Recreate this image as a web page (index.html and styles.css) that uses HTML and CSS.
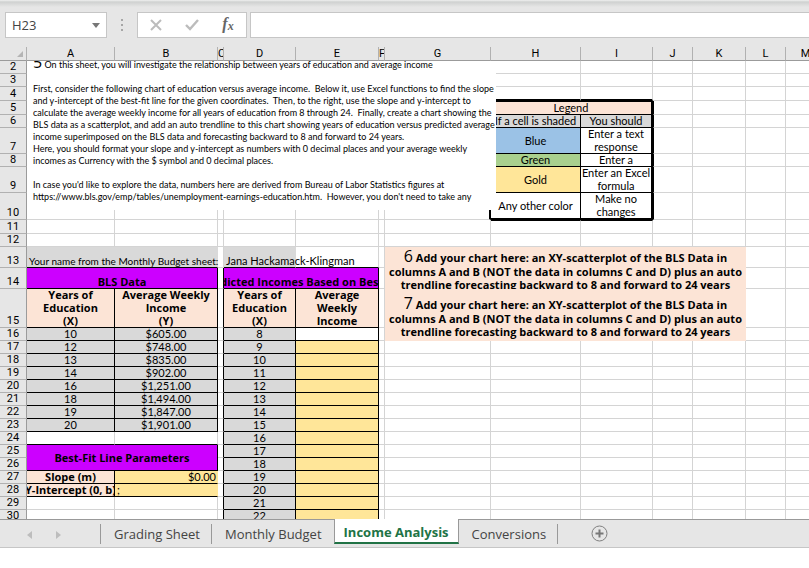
FILE: index.html
```html
<!DOCTYPE html>
<html lang="en">
<head>
    <meta charset="UTF-8">
    <meta name="viewport" content="width=device-width, initial-scale=1.0">
    <title>Income Analysis</title>
    <link rel="stylesheet" href="styles.css">
</head>
<body>
    <div class="formula-bar">
        <div class="name-box">
            <input type="text" id="nameBox" aria-label="Name box" value="H23">
            <svg width="8" height="5" viewBox="0 0 8 5"><path d="M0 0h8L4 5z" fill="#777"/></svg>
        </div>
        <svg class="dots" width="2" height="12" viewBox="0 0 2 12"><path d="M0 0h2v2H0zM0 5h2v2H0zM0 10h2v2H0z" fill="#a6a6a6"/></svg>
        <div class="fx-buttons">
            <button type="button" aria-label="Cancel"><svg width="12" height="12" viewBox="0 0 12 12"><path d="M1 1l10 10M11 1L1 11" stroke="#bcbcbc" stroke-width="2" fill="none"/></svg></button>
            <button type="button" aria-label="Enter"><svg width="14" height="12" viewBox="0 0 14 12"><path d="M1 6l4 4 8-9" stroke="#bcbcbc" stroke-width="2.4" fill="none"/></svg></button>
            <button type="button" class="fx" aria-label="Insert function"><i>f</i><sub>x</sub></button>
        </div>
        <input type="text" class="formula" aria-label="Formula">
    </div>

    <div class="sheet">
        <table>
            <colgroup>
                <col class="c-head"><col class="c-a"><col class="c-b"><col class="c-thin"><col class="c-d"><col class="c-e"><col class="c-thin"><col class="c-g"><col class="c-h"><col class="c-d"><col class="c-j"><col class="c-k"><col class="c-j"><col class="c-j"><col>
            </colgroup>
            <thead>
                <tr>
                    <th class="corner"><svg width="6" height="6" viewBox="0 0 6 6"><path d="M6 0v6H0z" fill="#b4b4b4"/></svg></th>
                    <th>A</th><th>B</th><th>C</th><th>D</th><th>E</th><th>F</th><th>G</th><th>H</th><th>I</th><th>J</th><th>K</th><th>L</th><th>M</th><th></th>
                </tr>
            </thead>
            <tbody>
                <tr><th>2</th><td></td><td></td><td></td><td></td><td></td><td></td><td></td><td></td><td></td><td></td><td></td><td></td><td></td><td></td></tr>
                <tr><th>3</th><td></td><td></td><td></td><td></td><td></td><td></td><td></td><td></td><td></td><td></td><td></td><td></td><td></td><td></td></tr>
                <tr class="h14"><th>4</th><td></td><td></td><td></td><td></td><td></td><td></td><td></td><td class="thick-b"></td><td class="thick-b"></td><td></td><td></td><td></td><td></td><td></td></tr>

                <!-- legend -->
                <tr class="h14"><th>5</th><td></td><td></td><td></td><td></td><td></td><td></td><td></td><td class="box peach edge-t thick-r" colspan="2">Legend</td><td class="edge-l"></td><td></td><td></td><td></td><td></td></tr>
                <tr><th>6</th><td></td><td></td><td></td><td></td><td></td><td></td><td></td><td class="box gray nowrap">If a cell is shaded</td><td class="box gray thick-r">You should</td><td class="edge-l"></td><td></td><td></td><td></td><td></td></tr>
                <tr class="h26"><th>7</th><td></td><td></td><td></td><td></td><td></td><td></td><td></td><td class="box blue mid">Blue</td><td class="box thick-r"><div class="lines">Enter a text<br>response</div></td><td class="edge-l"></td><td></td><td></td><td></td><td></td></tr>
                <tr><th>8</th><td></td><td></td><td></td><td></td><td></td><td></td><td></td><td class="box green">Green</td><td class="box thick-r">Enter a</td><td class="edge-l"></td><td></td><td></td><td></td><td></td></tr>
                <tr class="h26"><th>9</th><td></td><td></td><td></td><td></td><td></td><td></td><td></td><td class="box gold mid">Gold</td><td class="box thick-r nowrap"><div class="lines">Enter an Excel<br>formula</div></td><td class="edge-l"></td><td></td><td></td><td></td><td></td></tr>
                <tr class="h27"><th>10</th><td></td><td></td><td></td><td></td><td></td><td></td><td class="thick-r"></td><td class="box mid thick-b">Any other color</td><td class="box thick-r thick-b"><div class="lines">Make no<br>changes</div></td><td class="edge-l"></td><td></td><td></td><td></td><td></td></tr>
                <tr class="h14"><th>11</th><td></td><td></td><td></td><td></td><td></td><td></td><td></td><td class="edge-t"></td><td class="edge-t"></td><td></td><td></td><td></td><td></td><td></td></tr>
                <tr><th>12</th><td></td><td></td><td></td><td></td><td></td><td></td><td></td><td></td><td></td><td></td><td></td><td></td><td></td><td></td></tr>

                <tr class="h21">
                    <th>13</th>
                    <td class="gray spill small line-b" colspan="2">Your name from the Monthly Budget sheet:</td><td></td>
                    <td class="gray spill line-b">Jana Hackamack-Klingman</td><td class="line-b"></td><td></td>
                    <td class="chart-note top" colspan="5" rowspan="2"><div class="note-top"><span class="step">6</span> Add your chart here: an XY-scatterplot of the BLS Data in<br>columns A and B (NOT the data in columns C and D) plus an auto<br>trendline forecasting backward to 8 and forward to 24 years</div></td>
                    <td></td><td></td><td></td>
                </tr>
                <tr class="h21">
                    <th>14</th>
                    <td class="box purple" colspan="2">BLS Data</td><td class="line-r"></td>
                    <td class="box purple" colspan="2"><div class="clip"><span>Predicted Incomes Based on Best Fit</span></div></td><td></td>
                    <td></td><td></td><td></td>
                </tr>
                <tr class="h39">
                    <th>15</th>
                    <td class="box head"><div class="lines">Years of<br>Education<br>(X)</div></td><td class="box head"><div class="lines">Average Weekly<br>Income<br>(Y)</div></td><td class="line-r"></td>
                    <td class="box head"><div class="lines">Years of<br>Education<br>(X)</div></td><td class="box head"><div class="lines">Average<br>Weekly<br>Income</div></td><td></td>
                    <td class="chart-note" colspan="5" rowspan="2"><span class="step">7</span> Add your chart here: an XY-scatterplot of the BLS Data in<br>columns A and B (NOT the data in columns C and D) plus an auto<br>trendline forecasting backward to 8 and forward to 24 years</td>
                    <td></td><td></td><td></td>
                </tr>
                <tr><th>16</th><td class="box gray">10</td><td class="box gray">$605.00</td><td class="line-r"></td><td class="box gray">8</td><td class="box"></td><td></td><td></td><td></td><td></td></tr>
                <tr><th>17</th><td class="box gray">12</td><td class="box gray">$748.00</td><td class="line-r"></td><td class="box gray">9</td><td class="box gold"></td><td></td><td></td><td></td><td></td><td></td><td></td><td></td><td></td><td></td></tr>
                <tr><th>18</th><td class="box gray">13</td><td class="box gray">$835.00</td><td class="line-r"></td><td class="box gray">10</td><td class="box gold"></td><td></td><td></td><td></td><td></td><td></td><td></td><td></td><td></td><td></td></tr>
                <tr><th>19</th><td class="box gray">14</td><td class="box gray">$902.00</td><td class="line-r"></td><td class="box gray">11</td><td class="box gold"></td><td></td><td></td><td></td><td></td><td></td><td></td><td></td><td></td><td></td></tr>
                <tr><th>20</th><td class="box gray">16</td><td class="box gray">$1,251.00</td><td class="line-r"></td><td class="box gray">12</td><td class="box gold"></td><td></td><td></td><td></td><td></td><td></td><td></td><td></td><td></td><td></td></tr>
                <tr><th>21</th><td class="box gray">18</td><td class="box gray">$1,494.00</td><td class="line-r"></td><td class="box gray">13</td><td class="box gold"></td><td></td><td></td><td></td><td></td><td></td><td></td><td></td><td></td><td></td></tr>
                <tr><th>22</th><td class="box gray">19</td><td class="box gray">$1,847.00</td><td class="line-r"></td><td class="box gray">14</td><td class="box gold"></td><td></td><td></td><td></td><td></td><td></td><td></td><td></td><td></td><td></td></tr>
                <tr><th>23</th><td class="box gray">20</td><td class="box gray">$1,901.00</td><td class="line-r"></td><td class="box gray">15</td><td class="box gold"></td><td></td><td></td><td></td><td></td><td></td><td></td><td></td><td></td><td></td></tr>
                <tr><th>24</th><td class="line-b"></td><td class="line-b"></td><td class="line-r"></td><td class="box gray">16</td><td class="box gold"></td><td></td><td></td><td></td><td></td><td></td><td></td><td></td><td></td><td></td></tr>
                <tr><th>25</th><td class="box purple mid" colspan="2" rowspan="2">Best-Fit Line Parameters</td><td class="line-r"></td><td class="box gray">17</td><td class="box gold"></td><td></td><td></td><td></td><td></td><td></td><td></td><td></td><td></td><td></td></tr>
                <tr><th>26</th><td class="line-r"></td><td class="box gray">18</td><td class="box gold"></td><td></td><td></td><td></td><td></td><td></td><td></td><td></td><td></td><td></td></tr>
                <tr><th>27</th><td class="box head">Slope (m)</td><td class="gold line-b right">$0.00</td><td class="line-r"></td><td class="box gray">19</td><td class="box gold"></td><td></td><td></td><td></td><td></td><td></td><td></td><td></td><td></td><td></td></tr>
                <tr><th>28</th><td class="box head"><div class="clip"><span>Y-Intercept (0, b)</span></div></td><td class="gold line-b spill">;</td><td class="line-r"></td><td class="box gray">20</td><td class="box gold"></td><td></td><td></td><td></td><td></td><td></td><td></td><td></td><td></td><td></td></tr>
                <tr><th>29</th><td></td><td></td><td class="line-r"></td><td class="box gray">21</td><td class="box gold"></td><td></td><td></td><td></td><td></td><td></td><td></td><td></td><td></td><td></td></tr>
                <tr><th>30</th><td></td><td></td><td class="line-r"></td><td class="box gray">22</td><td class="box gold"></td><td></td><td></td><td></td><td></td><td></td><td></td><td></td><td></td><td></td></tr>
            </tbody>
        </table>

        <!-- text box floating over the grid -->
        <div class="instructions">
            <p><span class="step">5</span> On this sheet, you will investigate the relationship between years of education and average income</p>
            <p>First, consider the following chart of education versus average income.&nbsp; Below it, use Excel functions to find the slope<br>
            and y-intercept of the best-fit line for the given coordinates.&nbsp; Then, to the right, use the slope and y-intercept to<br>
            calculate the average weekly income for all years of education from 8 through 24.&nbsp; Finally, create a chart showing the<br>
            BLS data as a scatterplot, and add an auto trendline to this chart showing years of education versus predicted average<br>
            income superimposed on the BLS data and forecasting backward to 8 and forward to 24 years.<br>
            Here, you should format your slope and y-intercept as numbers with 0 decimal places and your average weekly<br>
            incomes as Currency with the $ symbol and 0 decimal places.</p>
            <p>In case you'd like to explore the data, numbers here are derived from Bureau of Labor Statistics figures at<br>
            https://www.bls.gov/emp/tables/unemployment-earnings-education.htm.&nbsp; However, you don't need to take any</p>
        </div>
    </div>

    <div class="tabs">
        <div class="tab-nav">
            <button type="button" aria-label="Previous sheet"><svg width="5" height="8" viewBox="0 0 5 8"><path d="M5 0v8L0 4z" fill="#bdbdbd"/></svg></button>
            <button type="button" aria-label="Next sheet"><svg width="5" height="8" viewBox="0 0 5 8"><path d="M0 0v8l5-4z" fill="#bdbdbd"/></svg></button>
        </div>
        <button type="button" class="tab">Grading Sheet</button>
        <button type="button" class="tab last">Monthly Budget</button>
        <button type="button" class="tab active">Income Analysis</button>
        <button type="button" class="tab">Conversions</button>
        <button type="button" class="add" aria-label="New sheet"><svg width="17" height="17" viewBox="0 0 17 17"><circle cx="8.500" cy="8.500" r="7.500" fill="none" stroke="#808080"/><path d="M8.500 4.500v8M4.500 8.500h8" stroke="#777" stroke-width="2"/></svg></button>
    </div>
</body>
</html>
```
FILE: styles.css
```css
* {
    box-sizing: border-box;
}
body {
    margin: 0;
    height: 100vh;
    padding-bottom: 20px;
    display: flex;
    flex-direction: column;
    overflow: hidden;
    background-color: #fff;
    font-family: Lato, Arial, sans-serif;
    color: #000;
}
button {
    margin: 0;
    padding: 0;
    border: 0;
    background: none;
    font: inherit;
    color: inherit;
}

/* formula bar */
.formula-bar {
    flex: none;
    display: flex;
    align-items: center;
    height: 47px;
    padding: 3px 0 0 5px;
    background: linear-gradient(#f0f0f0 0, #cfd1d0 2px, #e6e6e6 7px);
}
.name-box, .fx-buttons, .formula {
    height: 26px;
    border: 1px solid #c6c6c6;
    background-color: #fff;
}
.name-box {
    display: flex;
    align-items: center;
    width: 102px;
    padding: 0 6px;
}
.name-box input {
    flex: 1;
    min-width: 0;
    padding: 0;
    border: 0;
    font: 13px "Open Sans", sans-serif;
    color: #444;
}
.dots {
    margin: 0 14px;
}
.fx-buttons {
    display: flex;
    width: 110px;
    margin-right: 3px;
}
.fx-buttons button {
    flex: 1;
}
.fx-buttons svg {
    display: block;
    margin: auto;
}
.fx {
    font: bold 16px "Liberation Serif", serif;
    line-height: 20px;
    color: #666;
}
.fx sub {
    font-size: 12px;
    font-style: italic;
    vertical-align: -1px;
}
.formula {
    flex: 1;
    min-width: 0;
    border-right: 0;
}

/* grid */
.sheet {
    position: relative;
    flex: 1;
    min-height: 0;
    overflow: hidden;
}
table {
    width: 100%;
    table-layout: fixed;
    border-collapse: separate;
    border-spacing: 0;
    font-size: 11px;
    line-height: 12px;
}
.c-head { width: 27px; }
.c-a { width: 88px; }
.c-b { width: 103px; }
.c-thin { width: 6px; }
.c-d { width: 72px; }
.c-e { width: 83px; }
.c-g { width: 106px; }
.c-h { width: 90px; }
.c-j { width: 40px; }
.c-k { width: 53px; }

tr { height: 13px; }
thead tr { height: 14px; }
.h14 { height: 14px; }
.h21 { height: 21px; }
.h26 { height: 26px; }
.h27 { height: 27px; }
.h39 { height: 39px; }

th, td {
    padding: 0;
    border: 0 solid #d4d4d4;
    border-width: 0 1px 1px 0;
    vertical-align: bottom;
}
th {
    background-color: #e6e6e6;
    font-family: Roboto, sans-serif;
    font-weight: normal;
    text-align: center;
}
thead th {
    border-color: #b1b1b1;
    border-bottom-color: #9b9b9b;
    overflow: hidden;
}
tbody th {
    border-color: #b1b1b1;
    border-right-color: #9b9b9b;
}
.corner {
    padding-right: 3px;
    text-align: right;
}
.corner svg {
    display: block;
    margin: 0 0 3px auto;
}
.box {
    border-color: #000;
    text-align: center;
}
.line-r { border-right-color: #000; }
.line-b { border-bottom-color: #000; }
.thick-r { border-right: 2px solid #000; }
.thick-b { border-bottom: 2px solid #000; }
.edge-t { border-top: 1px solid #000; }
.edge-l { border-left: 1px solid #000; }
.mid { vertical-align: middle; }
.right {
    padding-right: 1px;
    text-align: right;
}
.nowrap { white-space: nowrap; }
.lines {
    margin-top: -1px;
    line-height: 13px;
}
.gray { background-color: #d9d9d9; }
.blue { background-color: #9bc2e6; }
.green { background-color: #a9d08e; }
.gold { background-color: #ffe699; }
.peach, .head, .chart-note { background-color: #fce4d6; }
.purple { background-color: #c0f; }
.head, .purple, .chart-note {
    font-family: "Open Sans", sans-serif;
    font-weight: bold;
}
.gold.line-b { border-right-color: #ffe699; }
.spill {
    padding-left: 2px;
    border-right-color: #d9d9d9;
    white-space: nowrap;
}
.small { font-size: 10px; }
.clip {
    display: flex;
    justify-content: center;
    overflow: hidden;
    white-space: nowrap;
}
.clip span {
    flex: none;
}
.chart-note {
    padding-bottom: 3px;
    border: 0;
    line-height: 13px;
    text-align: center;
    white-space: nowrap;
}
.chart-note.top {
    padding: 0;
    vertical-align: top;
}
.note-top {
    height: 42px;
    overflow: hidden;
}
.step {
    font: 16px "Open Sans", sans-serif;
    line-height: 18px;
}

.instructions {
    position: absolute;
    top: 14px;
    left: 27px;
    width: 469px;
    height: 149px;
    padding-left: 6px;
    overflow: hidden;
    background-color: #fff;
    font-size: 9px;
    line-height: 12px;
    white-space: nowrap;
}
.instructions p {
    margin: 0 0 12px;
}
.instructions p:first-child {
    margin-top: -4px;
}
.instructions .step {
    line-height: 10px;
}

/* sheet tabs */
.tabs {
    flex: none;
    display: flex;
    height: 29px;
    border-top: 1px solid #999;
    border-bottom: 1px solid #c6c6c6;
    background-color: #e6e6e6;
    font: 13px "Open Sans", sans-serif;
    color: #444;
}
.tab-nav {
    display: flex;
    width: 101px;
    padding-left: 27px;
    gap: 24px;
}
.tab {
    position: relative;
    padding: 0 12px 0 13px;
}
.tab::after, .tab-nav::after {
    content: "";
    align-self: center;
    height: 20px;
    border-right: 1px solid #999;
}
.tab-nav::after {
    margin-left: auto;
}
.tab::after {
    position: absolute;
    right: 0;
    top: 4px;
}
.tab.last::after {
    display: none;
}
.tab.active {
    height: 25px;
    margin-top: -1px;
    padding: 3px 9px 0;
    border: 1px solid #999;
    border-width: 0 1px;
    border-bottom: 2px solid #217346;
    background-color: #fff;
    font-weight: bold;
    color: #217346;
}
.tab.active::after {
    display: none;
}
.add {
    margin-left: 33px;
}
.add svg {
    display: block;
}
```
